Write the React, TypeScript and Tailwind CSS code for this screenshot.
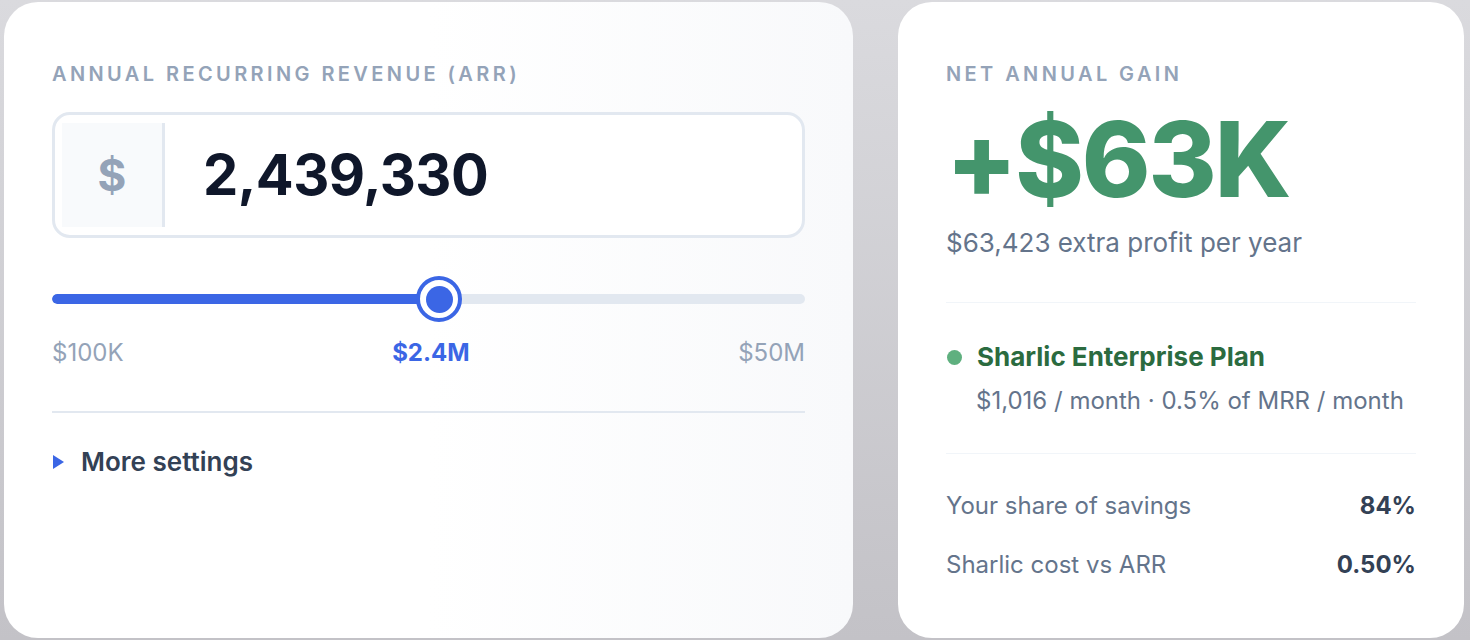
import React from 'react';

const MIN_ARR = 100_000;
const MAX_ARR = 50_000_000;

const fmt = (n: number) => n.toLocaleString('en-US');

const RevenueCard: React.FC<{ arr: number }> = ({ arr }) => {
  // slider is log scaled between $100K and $50M
  const pct = (Math.log(arr / MIN_ARR) / Math.log(MAX_ARR / MIN_ARR)) * 100;

  return (
    <div className="w-[849px] h-[636px] shrink-0 rounded-[34px] bg-gradient-to-r from-white via-white to-[#f8f9fb] px-12 pt-[58px]">
      <div className="text-[20px] leading-[28px] font-semibold tracking-[0.17em] text-[#94a3b8]">
        ANNUAL RECURRING REVENUE (ARR)
      </div>

      <div className="mt-6 h-[126px] rounded-[18px] border-[3px] border-[#e2e8f0] bg-white flex items-center pl-[7px]">
        <div className="w-[103px] h-[104px] bg-[#f8fafc] border-r-[3px] border-[#e2e8f0] flex items-center justify-center text-[44px] font-bold text-[#94a3b8]">
          $
        </div>
        <div className="pl-[38px] text-[56px] leading-none font-bold tracking-[-0.01em] text-[#0f172a]">
          {fmt(arr)}
        </div>
      </div>

      {/* slider */}
      <div className="mt-[38px] relative h-[46px] flex items-center">
        <div className="w-full h-[10px] rounded-full bg-[#e2e8f0] overflow-hidden">
          <div className="h-full bg-[#3b66e5] rounded-full" style={{ width: `${pct}%` }} />
        </div>
        <div
          className="absolute top-0 -ml-[23px] w-[46px] h-[46px] rounded-full border-[4px] border-[#3b66e5] bg-white flex items-center justify-center"
          style={{ left: `${pct}%` }}
        >
          <div className="w-[27px] h-[27px] rounded-full bg-[#3b66e5]" />
        </div>
      </div>

      <div className="mt-[17px] flex justify-between text-[24px] leading-[28px] text-[#94a3b8]">
        <span>$100K</span>
        <span className="font-bold text-[#3b66e5]">$2.4M</span>
        <span>$50M</span>
      </div>

      <div className="mt-[44px] h-[2px] bg-[#e2e8f0]" />

      <button className="mt-[33px] flex items-center gap-[17px] text-[26px] leading-[32px] font-semibold text-[#334155]">
        <svg width="11" height="14" viewBox="0 0 11 14" className="ml-[1px]">
          <path d="M0 0 L11 7 L0 14 Z" fill="#3b66e5" />
        </svg>
        More settings
      </button>
    </div>
  );
};

const GainCard: React.FC = () => (
  <div className="w-[566px] h-[636px] shrink-0 rounded-[34px] bg-white px-12 pt-[58px]">
    <div className="text-[20px] leading-[28px] font-semibold tracking-[0.17em] text-[#94a3b8]">
      NET ANNUAL GAIN
    </div>
    <div className="mt-[19px] text-[104px] leading-none font-extrabold tracking-[-0.02em] text-[#44956c]">
      +$63K
    </div>
    <div className="mt-4 text-[26px] leading-[32px] text-[#64748b]">$63,423 extra profit per year</div>

    <div className="mt-[43px] h-[1px] bg-[#f1f5f9]" />

    <div className="mt-[38px]">
      <div className="flex items-center gap-[15px] text-[26px] leading-[32px] font-bold text-[#2b6b3f]">
        <span className="ml-[1px] w-[15px] h-[15px] rounded-full bg-[#5fb07f]" />
        Sharlic Enterprise Plan
      </div>
      <div className="mt-3 pl-[30px] text-[24px] leading-[32px] text-[#64748b]">
        $1,016 / month · 0.5% of MRR / month
      </div>
    </div>

    <div className="mt-9 h-[1px] bg-[#f1f5f9]" />

    <div className="mt-9 flex flex-col gap-[27px] text-[24px] leading-[32px]">
      <div className="flex justify-between">
        <span className="text-[#64748b]">Your share of savings</span>
        <span className="font-bold text-[#334155]">84%</span>
      </div>
      <div className="flex justify-between">
        <span className="text-[#64748b]">Sharlic cost vs ARR</span>
        <span className="font-bold text-[#334155]">0.50%</span>
      </div>
    </div>
  </div>
);

export default function App() {
  return (
    <div
      className="w-[1470px] h-[640px] overflow-hidden bg-gradient-to-b from-[#dadade] to-[#c3c2c7] flex gap-[45px] pl-[4px] pt-[2px]"
      style={{ fontFamily: 'Inter, "Noto Sans", sans-serif' }}
    >
      <RevenueCard arr={2439330} />
      <GainCard />
    </div>
  );
}
